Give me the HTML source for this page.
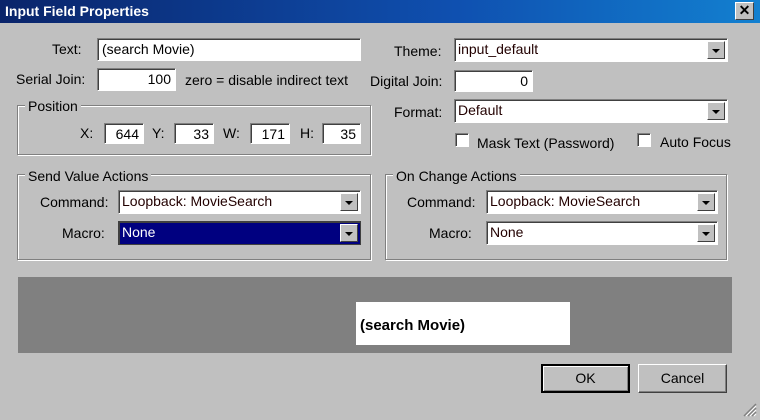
<!DOCTYPE html>
<html><head><style>
*{box-sizing:border-box;margin:0;padding:0}
body{width:760px;height:420px;background:#c0c0c0;font-family:"Liberation Sans",Arial,sans-serif;font-size:14px;color:#000;position:relative;overflow:hidden}
.a{position:absolute;white-space:nowrap}
.title{left:0;top:0;width:760px;height:23px;background:linear-gradient(90deg,#0a246a 0%,#0f50b0 60%,#1280d0 100%);color:#fff;font-weight:bold;font-size:14px;padding:3px 0 0 5px}
.close{left:735px;top:2px;width:19px;height:18px;background:#c0c0c0;border:1px solid;border-color:#fff #404040 #404040 #fff;font-weight:bold;font-size:14px;text-align:center;line-height:15px;color:#000}
.in{background:#fff;border:1px solid;border-color:#808080 #fff #fff #808080;box-shadow:inset 1px 1px 0 #404040;padding:2px 4px 0 4px;line-height:17px}
.r{text-align:right}
.grp{border:1px solid #808080;box-shadow:1px 1px 0 #fff, inset 1px 1px 0 #fff}
.gl{background:#c0c0c0;padding:0 3px}
.cb{background:#fff;border:1px solid;border-color:#808080 #fff #fff #808080;box-shadow:inset 1px 1px 0 #404040;padding:2px 4px 0 3px;line-height:17px;color:#200}
.arr{position:absolute;right:2px;top:2px;width:18px;height:18px;background:#c0c0c0;border:1px solid;border-color:#fff #404040 #404040 #fff}
.arr:after{content:"";position:absolute;left:4px;top:7px;border-left:4px solid transparent;border-right:4px solid transparent;border-top:4px solid #000}
.chk{width:14px;height:14px;background:#fff;border:1px solid;border-color:#808080 #fff #fff #808080;box-shadow:inset 1px 1px 0 #404040}
.btn{border:1px solid;border-color:#fff #404040 #404040 #fff;text-align:center;line-height:26px;font-size:14px}
</style></head><body>
<div class="a title">Input Field Properties</div>
<div class="a close">✕</div>

<div class="a" style="left:52px;top:41px">Text:</div>
<div class="a in" style="left:97px;top:38px;width:264px;height:23px">(search Movie)</div>
<div class="a" style="left:16px;top:71px">Serial Join:</div>
<div class="a in r" style="left:97px;top:68px;width:79px;height:23px">100</div>
<div class="a" style="left:185px;top:72px">zero = disable indirect text</div>

<div class="a grp" style="left:17px;top:105px;width:354px;height:50px"></div>
<div class="a gl" style="left:25px;top:98px">Position</div>
<div class="a" style="left:80px;top:125px">X:</div>
<div class="a in r" style="left:104px;top:123px;width:40px;height:21px;line-height:16px">644</div>
<div class="a" style="left:152px;top:125px">Y:</div>
<div class="a in r" style="left:174px;top:123px;width:40px;height:21px;line-height:16px">33</div>
<div class="a" style="left:223px;top:125px">W:</div>
<div class="a in r" style="left:250px;top:123px;width:40px;height:21px;line-height:16px">171</div>
<div class="a" style="left:300px;top:125px">H:</div>
<div class="a in r" style="left:322px;top:123px;width:39px;height:21px;line-height:16px">35</div>

<div class="a" style="left:394px;top:43px">Theme:</div>
<div class="a cb" style="left:454px;top:38px;width:274px;height:24px">input_default<div class="arr"></div></div>
<div class="a" style="left:370px;top:73px">Digital Join:</div>
<div class="a in r" style="left:454px;top:70px;width:79px;height:22px">0</div>
<div class="a" style="left:394px;top:104px">Format:</div>
<div class="a cb" style="left:454px;top:99px;width:274px;height:24px">Default<div class="arr"></div></div>
<div class="a chk" style="left:455px;top:133px"></div>
<div class="a" style="left:477px;top:135px">Mask Text (Password)</div>
<div class="a chk" style="left:637px;top:133px"></div>
<div class="a" style="left:660px;top:134px">Auto Focus</div>

<div class="a grp" style="left:17px;top:174px;width:354px;height:86px"></div>
<div class="a gl" style="left:25px;top:168px">Send Value Actions</div>
<div class="a" style="left:40px;top:194px">Command:</div>
<div class="a cb" style="left:118px;top:190px;width:243px;height:24px">Loopback: MovieSearch<div class="arr"></div></div>
<div class="a" style="left:62px;top:225px">Macro:</div>
<div class="a cb" style="left:118px;top:221px;width:243px;height:24px;background:#000080;color:#fff;border-color:#404040">None<div class="arr"></div></div>

<div class="a grp" style="left:385px;top:174px;width:342px;height:86px"></div>
<div class="a gl" style="left:393px;top:168px">On Change Actions</div>
<div class="a" style="left:407px;top:194px">Command:</div>
<div class="a cb" style="left:486px;top:190px;width:232px;height:24px">Loopback: MovieSearch<div class="arr"></div></div>
<div class="a" style="left:429px;top:225px">Macro:</div>
<div class="a cb" style="left:486px;top:221px;width:232px;height:24px">None<div class="arr"></div></div>

<div class="a" style="left:18px;top:277px;width:714px;height:76px;background:#808080"></div>
<div class="a" style="left:356px;top:302px;width:214px;height:43px;background:#fff;font-weight:bold;font-size:15px;padding:15px 0 0 4px">(search Movie)</div>

<div class="a btn" style="left:541px;top:364px;width:89px;height:29px;border:2px solid #000;box-shadow:inset 1px 1px 0 #fff, inset -1px -1px 0 #808080;line-height:25px">OK</div>
<div class="a btn" style="left:638px;top:364px;width:89px;height:29px;box-shadow:inset -1px -1px 0 #808080">Cancel</div>
<svg class="a" style="left:743px;top:403px" width="14" height="14"><path d="M13 1L1 13M13 5L5 13M13 9L9 13" stroke="#808080" stroke-width="1.5"/><path d="M13 3L3 13M13 7L7 13M13 11L11 13" stroke="#fff" stroke-width="1"/></svg>
</body></html>
